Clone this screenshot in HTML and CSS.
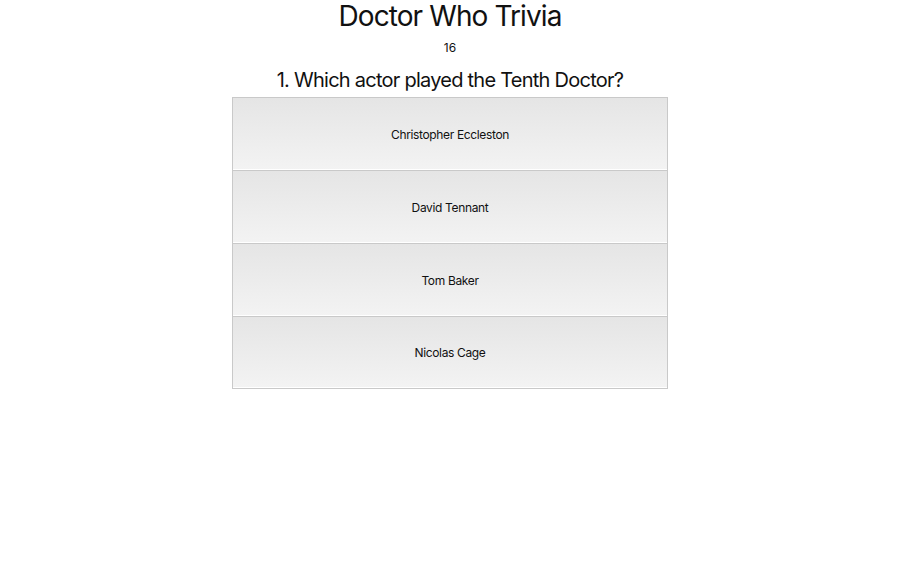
FILE: index.html
```html
<!DOCTYPE html>
<html>
<head>
<meta charset="utf-8">
<link rel="stylesheet" href="styles.css">
</head>
<body>
<div class="app">
  <h1 class="title">Doctor Who Trivia</h1>
  <div class="timer">16</div>
  <h2 class="question">1. Which actor played the Tenth Doctor?</h2>
  <div class="answers">
    <button class="answer">Christopher Eccleston</button>
    <button class="answer">David Tennant</button>
    <button class="answer">Tom Baker</button>
    <button class="answer">Nicolas Cage</button>
  </div>
</div>
</body>
</html>
```
FILE: styles.css
```css
html, body {
  margin: 0;
  padding: 0;
  background: #fff;
}
body {
  font-family: Inter, "Liberation Sans", sans-serif;
  color: #111;
}
.app {
  display: flex;
  flex-direction: column;
  align-items: center;
}
.title {
  font-size: 28px;
  font-weight: 400;
  margin: 0;
  line-height: 32px;
  letter-spacing: -0.9px;
}
.timer {
  font-size: 12px;
  margin-top: 8px;
  line-height: 16px;
}
.question {
  font-size: 20px;
  font-weight: 400;
  margin: 11px 0 0;
  line-height: 26px;
  letter-spacing: -0.75px;
}
.answers {
  width: 436px;
  display: flex;
  flex-direction: column;
  margin-top: 4px;
}
.answer {
  height: 74px;
  margin: 0;
  margin-top: -1px;
  font-family: inherit;
  font-size: 12px;
  letter-spacing: -0.35px;
  color: #111;
  border: 1px solid #c9c9c9;
  border-bottom-color: #b3b3b3;
  background: linear-gradient(to bottom, #e5e5e5, #f3f3f3);
  box-shadow: inset 0 -1px 0 #fff;
  padding: 0;
}
.answer:first-child {
  margin-top: 0;
}
.answer:last-child {
  height: 73px;
  border-bottom-color: #c9c9c9;
}
```
